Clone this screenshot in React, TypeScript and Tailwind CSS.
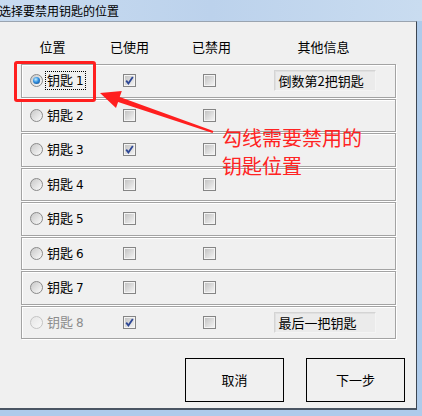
import React from "react";

const cjk = '"Noto Sans CJK SC", "Noto Sans", sans-serif';

type Row = { n: number; used: boolean; info?: string; selected?: boolean; disabled?: boolean; focus?: boolean };

const rows: Row[] = [
  { n: 1, used: true, info: "倒数第2把钥匙", selected: true, focus: true },
  { n: 2, used: false },
  { n: 3, used: true },
  { n: 4, used: false },
  { n: 5, used: false },
  { n: 6, used: false },
  { n: 7, used: false },
  { n: 8, used: true, info: "最后一把钥匙", disabled: true },
];

function Radio({ selected, disabled }: { selected?: boolean; disabled?: boolean }) {
  return (
    <div
      className={
        "w-[13px] h-[13px] rounded-full border flex items-center justify-center " +
        (disabled
          ? "border-[#c4c4c4] bg-gradient-to-br from-[#e6e6e6] to-[#f8f8f8]"
          : "border-[#8a8a8a] bg-gradient-to-br from-[#c8c8c8] to-[#fbfbfb]")
      }
    >
      {selected && (
        <div className="w-[7px] h-[7px] rounded-full bg-[radial-gradient(circle_at_40%_35%,#c4f0ff,#2f8ee0_45%,#0b3d78)]" />
      )}
    </div>
  );
}

function Check({ checked }: { checked?: boolean }) {
  return (
    <div className="w-[13px] h-[13px] border border-[#858585] bg-[#f4f4f4] p-[1px]">
      <div className="w-full h-full bg-gradient-to-br from-[#c4c4c4] to-[#f2f2f2] flex items-center justify-center">
        {checked && (
          <svg width="9" height="9" viewBox="0 0 9 9">
            <path d="M1.2 4.6 L3.4 7.4 L7.8 1" fill="none" stroke="#2d4795" strokeWidth="1.8" />
          </svg>
        )}
      </div>
    </div>
  );
}

export default function App() {
  return (
    <div className="w-[422px] h-[416px] relative overflow-hidden bg-[#aecbeb] text-black" style={{ fontFamily: cjk }}>
      {/* title bar */}
      <div className="h-[21px] bg-gradient-to-r from-[#c8dbf0] via-[#bcd2ec] to-[#c9dcf0] flex items-center">
        <span className="text-[12px] leading-[16px] text-black -ml-[1px]">选择要禁用钥匙的位置</span>
      </div>
      {/* client */}
      <div className="w-[417px] h-[389px] bg-[#f0f0f0] border-t border-t-[#9aa4b0] border-r border-r-[#3c4653] border-b-[2px] border-b-[#4a5563] flex flex-col">
        {/* header */}
        <div className="flex mt-[16px] ml-[22px] text-[13px] leading-[18px]">
          <div className="w-[61px] text-center">位置</div>
          <div className="w-[93px] text-center">已使用</div>
          <div className="w-[71px] text-center">已禁用</div>
          <div className="w-[153px] text-center">其他信息</div>
        </div>
        {/* rows */}
        <div className="ml-[21px] mt-[8px] w-[375px] flex flex-col gap-[1px]">
          {rows.map((r) => (
            <div
              key={r.n}
              className="h-[33.5px] border border-[#a3a3a3] shadow-[inset_1px_1px_0_#ffffff,1px_1px_0_#ffffff] flex items-center"
            >
              <div className="w-[78px] flex items-center pl-[8px]">
                <Radio selected={r.selected} disabled={r.disabled} />
                <span
                  className={
                    "ml-[3px] text-[13px] leading-[15px] px-[1px] " +
                    (r.focus ? "outline outline-1 outline-dotted outline-black " : "") +
                    (r.disabled ? "text-[#8c8c8c]" : "text-black")
                  }
                >
                  钥匙{" "}
                  <span className="text-[12px]" style={{ fontFamily: '"DejaVu Sans", sans-serif' }}>
                    {r.n}
                  </span>
                </span>
              </div>
              <div className="w-[58px] flex justify-center">
                <Check checked={r.used} />
              </div>
              <div className="w-[103px] flex justify-center">
                <Check />
              </div>
              <div className="w-[127px] flex justify-center">
                {r.info && (
                  <div className="w-[102px] h-[21px] bg-[#ebebeb] border border-[#d4d4d4] border-b-[#f4f4f4] border-r-[#f4f4f4] shadow-[inset_1px_1px_0_#e0e0e0] flex items-center pl-[4px] text-[13px] leading-[15px]">
                    {r.info}
                  </div>
                )}
              </div>
            </div>
          ))}
        </div>
        {/* buttons */}
        <div className="flex ml-[185px] mt-[19px] gap-[22px]">
          <button className="w-[99px] h-[44px] border border-black bg-[#f0f0f0] text-[13px] leading-[16px]">取消</button>
          <button className="w-[99px] h-[44px] border border-black bg-[#f0f0f0] text-[13px] leading-[16px]">下一步</button>
        </div>
      </div>

      {/* annotation overlay */}
      <div className="absolute left-[14px] top-[61px] w-[82px] h-[41px] border-[3px] border-[#ff1f1f] rounded-[3px]" />
      <svg className="absolute left-0 top-0" width="422" height="416" viewBox="0 0 422 416">
        <polygon
          points="100,93 121.8,91 119.7,97.1 213.4,130.9 212.6,133.1 118.1,101.9 116,108"
          fill="#ff1f1f"
        />
      </svg>
      <div className="absolute left-[222px] top-[124px] text-[20px] leading-[28px] text-[#ff2323]">
        <div>勾线需要禁用的</div>
        <div>钥匙位置</div>
      </div>
    </div>
  );
}
